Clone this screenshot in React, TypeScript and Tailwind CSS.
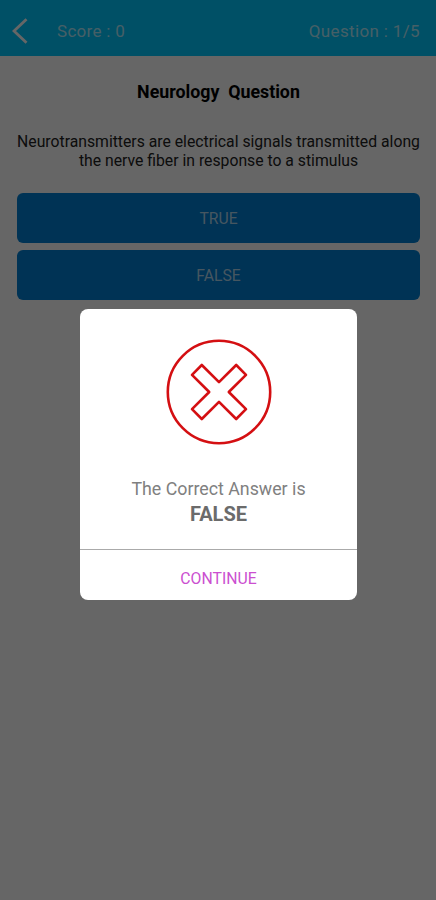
import { useState } from "react";

interface Question {
    category: string;
    text: string;
    answer: "TRUE" | "FALSE";
}

const question: Question = {
    category: "Neurology",
    text: "Neurotransmitters are electrical signals transmitted along the nerve fiber in response to a stimulus",
    answer: "FALSE",
};

const options = ["TRUE", "FALSE"];

function WrongIcon() {
    return (
        <svg width="106" height="106" viewBox="0 0 106 106" fill="none" stroke="#d40f12" strokeWidth="2.6" className="shrink-0">
            <circle cx="53" cy="53" r="51.2" />
            <path strokeLinejoin="round" d="M35.8 26 53 43.2 70.2 26 80 35.8 62.8 53 80 70.2 70.2 80 53 62.8 35.8 80 26 70.2 43.2 53 26 35.8Z" />
        </svg>
    );
}

export default function App() {
    const [showResult, setShowResult] = useState(true);

    return (
        <div className="relative h-screen w-full overflow-hidden bg-white font-['Roboto',sans-serif]">
            <header className="flex h-14 items-center bg-[#00c8ff] pl-3 pr-4 pt-1.5 text-white/70">
                <button aria-label="Back" className="text-white">
                    <svg width="16" height="26" viewBox="0 0 16 26" fill="none" stroke="currentColor" strokeWidth="2.8">
                        <path d="M14.5 1.2 2 13 14.5 24.8" />
                    </svg>
                </button>
                <span className="ml-[29px] pt-0.5 text-[17px] tracking-[0.3px]">Score : 0</span>
                <span className="ml-auto pt-0.5 text-[17px] tracking-[0.35px]">Question : 1/5</span>
            </header>

            <main className="flex flex-col pl-[17px] pr-4 pt-6 text-center">
                <h1 className="whitespace-pre text-[17.8px] font-bold leading-6 text-black">{question.category}  Question</h1>
                <p className="-mx-2 mt-7 text-[15.75px] leading-[19px] text-[#222]">{question.text}</p>
                <div className="mt-[23px] flex flex-col gap-[7px]">
                    {options.map((option) => (
                        <button
                            key={option}
                            onClick={() => setShowResult(true)}
                            className="h-[50px] rounded-md bg-[#0080d4] pt-0.5 text-[15.7px] text-white/70"
                        >
                            {option}
                        </button>
                    ))}
                </div>
            </main>

            {showResult && (
                <div className="absolute inset-0 flex items-start justify-center bg-black/60 pl-px pt-[309px]">
                    <div className="flex h-[291px] w-[277px] flex-col items-center rounded-lg bg-white pt-[30px]">
                        <WrongIcon />
                        <p className="mt-8 text-[17.8px] leading-6 text-[#808080]">The Correct Answer is</p>
                        <p className="mt-px text-[20px] font-bold leading-6 text-[#6b6b6b]">{question.answer}</p>
                        <button
                            onClick={() => setShowResult(false)}
                            className="mt-auto h-[51px] w-full border-t-[1.5px] border-[#aaa] pt-[7px] text-[15.8px] text-[#cb4fd0]"
                        >
                            CONTINUE
                        </button>
                    </div>
                </div>
            )}
        </div>
    );
}
